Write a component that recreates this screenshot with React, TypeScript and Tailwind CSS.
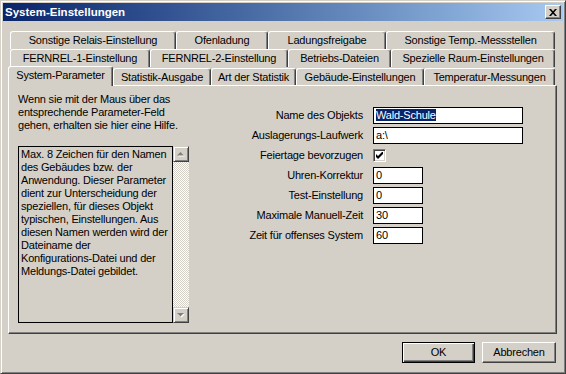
import React from 'react';

const rowOne = [
  { label: 'Sonstige Relais-Einstellung', w: 'w-[166px]' },
  { label: 'Ofenladung', w: 'w-[92px]' },
  { label: 'Ladungsfreigabe', w: 'w-[118px]' },
  { label: 'Sonstige Temp.-Messstellen', w: 'w-[169px]' },
];

const rowTwo = [
  { label: 'FERNREL-1-Einstellung', w: 'w-[140px]' },
  { label: 'FERNREL-2-Einstellung', w: 'w-[138px]' },
  { label: 'Betriebs-Dateien', w: 'w-[103px]' },
  { label: 'Spezielle Raum-Einstellungen', w: 'w-[164px]' },
];

const rowThree = [
  { label: 'Statistik-Ausgabe', w: 'w-[98px]' },
  { label: 'Art der Statistik', w: 'w-[85px]' },
  { label: 'Gebäude-Einstellungen', w: 'w-[128px]' },
  { label: 'Temperatur-Messungen', w: 'w-[131px]' },
];

const helpLines = [
  'Max. 8 Zeichen für den Namen',
  'des Gebäudes bzw. der',
  'Anwendung. Dieser Parameter',
  'dient zur Unterscheidung der',
  'speziellen, für dieses Objekt',
  'typischen, Einstellungen. Aus',
  'diesen Namen werden wird der',
  'Dateiname der',
  'Konfigurations-Datei und der',
  'Meldungs-Datei gebildet.',
];

const tabClass =
  'flex items-center justify-center bg-[#d4d0c8] border-t border-l border-r border-t-white border-l-white border-r-[#404040] rounded-tl-[3px] rounded-tr-[3px] shadow-[inset_-1px_0_0_#808080] whitespace-nowrap';

function Tab({ label, w }: { label: string; w: string }) {
  return <div className={`${tabClass} ${w} h-[18px]`}>{label}</div>;
}

function Arrow({ down }: { down?: boolean }) {
  return (
    <div className="w-[16px] h-[16px] flex items-center justify-center bg-[#d4d0c8] border-t border-l border-r border-b border-t-[#d4d0c8] border-l-[#d4d0c8] border-r-[#404040] border-b-[#404040] shadow-[inset_1px_1px_0_#fff,inset_-1px_-1px_0_#808080]">
      <svg width="8" height="5" viewBox="0 0 8 5">
        {down ? (
          <>
            <path d="M1 1h7L4.5 4.5z" fill="#fff" />
            <path d="M0 0h7L3.5 3.5z" fill="#808080" />
          </>
        ) : (
          <>
            <path d="M1 4.5h7L4.5 1z" fill="#fff" />
            <path d="M0 3.5h7L3.5 0z" fill="#808080" />
          </>
        )}
      </svg>
    </div>
  );
}

function Field({ value, wide, selected }: { value: string; wide?: boolean; selected?: boolean }) {
  return (
    <div
      className={`${wide ? 'w-[150px]' : 'w-[50px]'} h-[17px] border border-black bg-white pl-[2px] leading-[15px] whitespace-nowrap`}
    >
      {selected ? <span className="bg-[#0a246a] text-white">{value}</span> : value}
    </div>
  );
}

export default function App() {
  return (
    <div className="w-[566px] h-[374px] bg-[#d4d0c8] border border-t-[#d4d0c8] border-l-[#d4d0c8] border-r-[#404040] border-b-[#404040] shadow-[inset_1px_1px_0_#fff,inset_-1px_-1px_0_#808080] p-[2px] flex flex-col font-['Liberation_Sans',Arial,sans-serif] text-[11px] leading-[13px] tracking-[-0.2px] text-black overflow-hidden">
      {/* title bar */}
      <div className="h-[18px] flex items-center bg-linear-to-r from-[#0a246a] to-[#a6caf0] pl-[2px] pr-[2px]">
        <span className="font-bold text-white text-[11.5px] tracking-normal">System-Einstellungen</span>
        <div className="ml-auto w-[16px] h-[14px] flex items-center justify-center bg-[#d4d0c8] border border-t-white border-l-white border-r-[#404040] border-b-[#404040] shadow-[inset_-1px_-1px_0_#808080]">
          <svg width="8" height="7" viewBox="0 0 8 7">
            <path d="M0 0h2l2 2.2L6 0h2L5 3.5 8 7H6L4 4.8 2 7H0l3-3.5z" fill="#000" />
          </svg>
        </div>
      </div>

      <div className="flex-1 flex flex-col pl-[5px] pr-[6px]">
        {/* tab rows */}
        <div className="mt-[10px] mx-[2px] flex flex-col">
          <div className="flex h-[18px]">
            {rowOne.map((t) => (
              <Tab key={t.label} {...t} />
            ))}
          </div>
          <div className="flex h-[18px]">
            {rowTwo.map((t) => (
              <Tab key={t.label} {...t} />
            ))}
          </div>
          <div className="flex h-[18px] items-start">
            <div className={`${tabClass} relative z-10 -ml-[2px] -mt-[1px] w-[105px] h-[20px] pb-[2px]`}>
              System-Parameter
            </div>
            {rowThree.map((t) => (
              <div key={t.label} className={`${tabClass} ${t.w} mt-[1px] h-[17px]`}>
                {t.label}
              </div>
            ))}
          </div>
        </div>

        {/* panel */}
        <div className="h-[249px] border border-t-white border-l-white border-r-[#404040] border-b-[#404040] shadow-[inset_-1px_-1px_0_#808080] flex pl-[9px] pt-[7px]">
          <div className="w-[171px] flex flex-col">
            <div className="whitespace-nowrap">
              Wenn sie mit der Maus über das
              <br />
              entsprechende Parameter-Feld
              <br />
              gehen, erhalten sie hier eine Hilfe.
            </div>
            <div className="mt-[14px] h-[177px] flex">
              <div className="w-[155px] border border-black px-[2px] pt-[1px] whitespace-nowrap">
                {helpLines.map((l) => (
                  <div key={l}>{l}</div>
                ))}
              </div>
              <div className="w-[16px] flex flex-col">
                <Arrow />
                <div className="flex-1 bg-[repeating-conic-gradient(#d4d0c8_0%_25%,#ffffff_0%_50%)] bg-[length:2px_2px]" />
                <Arrow down />
              </div>
            </div>
          </div>

          <div className="ml-[12px] mt-[14px] grid grid-cols-[162px_auto] gap-x-[10px] gap-y-[3px] auto-rows-[17px] self-start">
            <div className="text-right leading-[17px] whitespace-nowrap">Name des Objekts</div>
            <Field value="Wald-Schule" wide selected />
            <div className="text-right leading-[17px] whitespace-nowrap">Auslagerungs-Laufwerk</div>
            <Field value="a:\" wide />
            <div className="text-right leading-[17px] whitespace-nowrap">Feiertage bevorzugen</div>
            <div className="self-center w-[13px] h-[13px] bg-white border border-t-[#808080] border-l-[#808080] border-r-white border-b-white shadow-[inset_1px_1px_0_#404040,inset_-1px_-1px_0_#d4d0c8] flex items-center justify-center">
              <svg width="7" height="7" viewBox="0 0 7 7">
                <path d="M0 2v3l2 2 5-5V-1L2 4z" fill="#000" />
              </svg>
            </div>
            <div className="text-right leading-[17px] whitespace-nowrap">Uhren-Korrektur</div>
            <Field value="0" />
            <div className="text-right leading-[17px] whitespace-nowrap">Test-Einstellung</div>
            <Field value="0" />
            <div className="text-right leading-[17px] whitespace-nowrap">Maximale Manuell-Zeit</div>
            <Field value="30" />
            <div className="text-right leading-[17px] whitespace-nowrap">Zeit für offenses System</div>
            <Field value="60" />
          </div>
        </div>

        {/* buttons */}
        <div className="mt-[8px] flex justify-end gap-[7px] mr-[1px]">
          <button className="w-[73px] h-[21px] bg-[#d4d0c8] border border-black shadow-[inset_1px_1px_0_#fff,inset_-1px_-1px_0_#404040,inset_-2px_-2px_0_#808080]">
            OK
          </button>
          <button className="w-[74px] h-[21px] bg-[#d4d0c8] border border-t-white border-l-white border-r-[#404040] border-b-[#404040] shadow-[inset_-1px_-1px_0_#808080]">
            Abbrechen
          </button>
        </div>
      </div>
    </div>
  );
}
